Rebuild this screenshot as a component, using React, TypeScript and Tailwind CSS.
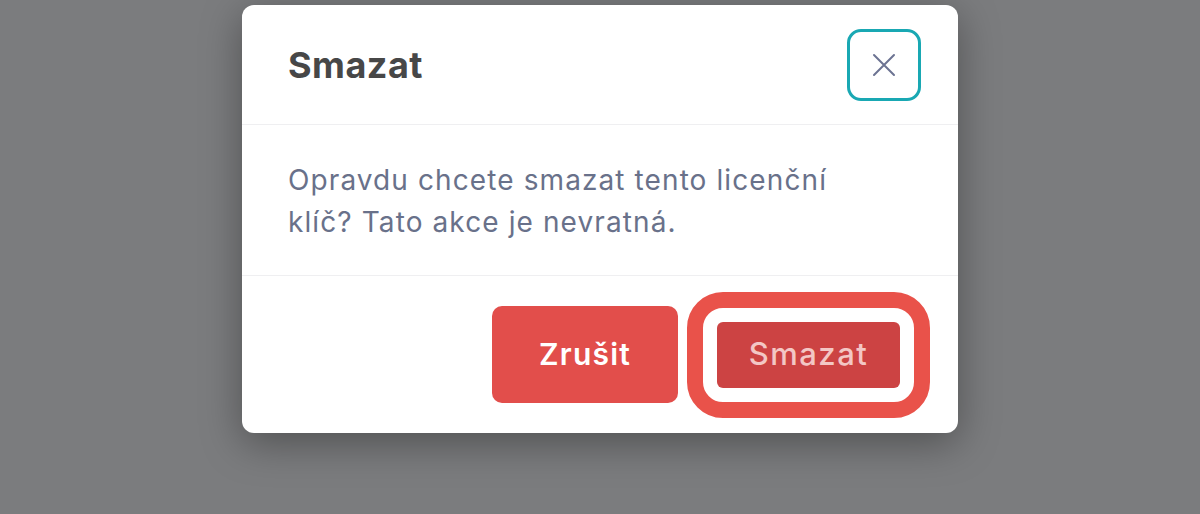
import React from "react";

const font = { fontFamily: "Inter, 'Noto Sans', sans-serif" };

function CloseIcon() {
  return (
    <svg width="24" height="24" viewBox="0 0 24 24" fill="none">
      <path
        d="M2 2L22 22M22 2L2 22"
        stroke="#6c7392"
        strokeWidth="2"
        strokeLinecap="round"
      />
    </svg>
  );
}

export default function App() {
  return (
    <div
      className="flex h-[514px] w-full justify-center overflow-hidden bg-[#7b7c7e] pt-[5px]"
      style={font}
    >
      <div className="flex h-[428px] w-[716px] flex-col rounded-[12px] bg-white shadow-[0_10px_40px_rgba(0,0,0,0.35)]">
        {/* header */}
        <div className="flex h-[120px] items-center justify-between border-b border-[#efeff1] pl-[46px] pr-[37px]">
          <h2 className="text-[36px] font-bold tracking-[0.5px] text-[#474747]">
            Smazat
          </h2>
          <button className="flex h-[72px] w-[74px] items-center justify-center rounded-[14px] border-[3px] border-[#19a8b3] bg-white">
            <CloseIcon />
          </button>
        </div>

        {/* body */}
        <div className="h-[151px] border-b border-[#efeff1] px-[46px] pt-[34px]">
          <p className="w-[600px] text-[28px] leading-[42px] tracking-[1.1px] text-[#69718a]">
            Opravdu chcete smazat tento licenční klíč? Tato akce je nevratná.
          </p>
        </div>

        {/* footer */}
        <div className="flex flex-1 items-center justify-end gap-[9px] pr-[28px]">
          <button className="h-[97px] w-[186px] rounded-[10px] bg-[#e24e4b] text-[30px] font-semibold tracking-[1.2px] text-white">
            Zrušit
          </button>
          <div className="rounded-[36px] border-[16px] border-[#e9524a] bg-white p-[14px]">
            <button className="flex h-[66px] w-[183px] items-center justify-center rounded-[6px] bg-[#cc4343] text-[31px] font-medium tracking-[1.5px] text-[#f3c7c5]">
              Smazat
            </button>
          </div>
        </div>
      </div>
    </div>
  );
}
